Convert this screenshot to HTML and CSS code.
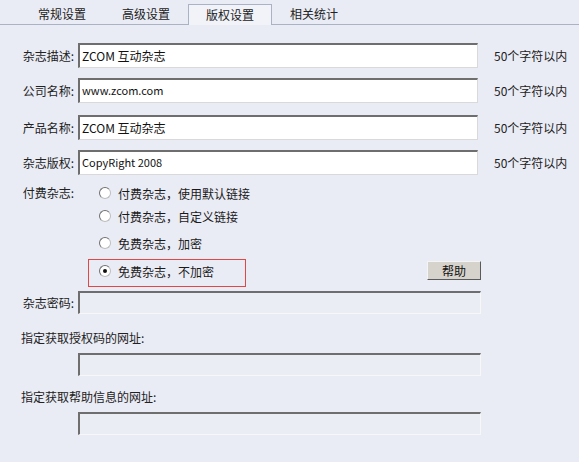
FILE: index.html
```html
<!DOCTYPE html>
<html lang="zh-CN">
<head>
<meta charset="utf-8">
<title>版权设置</title>
<link rel="stylesheet" href="styles.css">
</head>
<body>
<div class="tabs">
  <div class="tab">常规设置</div>
  <div class="tab">高级设置</div>
  <div class="tab active">版权设置</div>
  <div class="tab">相关统计</div>
</div>
<div class="panel">
  <div class="row r1">
    <label class="lbl">杂志描述:</label>
    <div class="field">ZCOM 互动杂志</div>
    <span class="hint">50个字符以内</span>
  </div>
  <div class="row r2">
    <label class="lbl">公司名称:</label>
    <div class="field small">www.zcom.com</div>
    <span class="hint">50个字符以内</span>
  </div>
  <div class="row r3">
    <label class="lbl">产品名称:</label>
    <div class="field">ZCOM 互动杂志</div>
    <span class="hint">50个字符以内</span>
  </div>
  <div class="row r4">
    <label class="lbl">杂志版权:</label>
    <div class="field small">CopyRight 2008</div>
    <span class="hint">50个字符以内</span>
  </div>

  <div class="radios">
    <div class="lbl lbl-top">付费杂志:</div>
    <div class="options">
      <div class="opt o1"><span class="radio"></span>付费杂志，使用默认链接</div>
      <div class="opt o2"><span class="radio"></span>付费杂志，自定义链接</div>
      <div class="opt o3"><span class="radio"></span>免费杂志，加密</div>
      <div class="last">
        <div class="opt selected"><span class="radio on"></span>免费杂志，不加密</div>
        <button class="btn">帮助</button>
      </div>
    </div>
  </div>

  <div class="row pw">
    <label class="lbl">杂志密码:</label>
    <div class="field wide disabled"></div>
  </div>

  <div class="caption c1">指定获取授权码的网址:</div>
  <div class="indent"><div class="field wide disabled"></div></div>
  <div class="caption c2">指定获取帮助信息的网址:</div>
  <div class="indent"><div class="field wide disabled"></div></div>
</div>
</body>
</html>
```

FILE: styles.css
```css
html, body {
  margin: 0;
  padding: 0;
  background: #eaecf5;
  font-family: "Noto Sans CJK SC", "DejaVu Sans", sans-serif;
  font-size: 12px;
  color: #1a1a1a;
}
body {
  width: 579px;
  height: 462px;
  overflow: hidden;
}
.tabs {
  display: flex;
  height: 24px;
  padding-left: 20px;
  border-bottom: 1px solid #aab3c6;
  align-items: flex-end;
}
.tab {
  width: 84px;
  height: 20px;
  line-height: 20px;
  text-align: center;
  box-sizing: border-box;
  color: #222;
}
.tab.active {
  background: #f1f3f9;
  border: 1px solid #aab3c6;
  border-bottom: none;
  height: 20px;
  margin-bottom: -1px;
  height: 21px;
  line-height: 19px;
}
.panel {
  display: flex;
  flex-direction: column;
  padding-top: 18px;
}
.row {
  display: flex;
  align-items: center;
  height: 25px;
}
.r2 { margin-top: 10px; }
.r3 { margin-top: 12px; }
.r4 { margin-top: 10px; height: 24px; }
.lbl {
  width: 74px;
  text-align: right;
  margin-right: 4px;
  flex: none;
  color: #222;
}
.field {
  width: 400px;
  height: 25px;
  box-sizing: border-box;
  background: #fff;
  border-top: 2px solid #6e6e6e;
  border-left: 2px solid #6e6e6e;
  border-right: 1px solid #d9d9d9;
  border-bottom: 1px solid #d9d9d9;
  padding-left: 2px;
  line-height: 21px;
  white-space: nowrap;
  color: #111;
}
.field.small { font-size: 11px; }
.field.wide { width: 403px; height: 23px; }
.field.disabled { background: #ebedf4; border-right-color: #f7f7f7; border-bottom-color: #f7f7f7; }
.hint {
  margin-left: 16px;
  color: #222;
}
.radios {
  display: flex;
  margin-top: 8px;
}
.lbl-top {
  line-height: 22px;
  text-align: right;
}
.options {
  display: flex;
  flex-direction: column;
  margin-left: 10px;
  width: 393px;
}
.opt {
  display: flex;
  align-items: center;
  height: 22px;
  padding-left: 11px;
}
.o2 { margin-top: 1px; }
.o3 { margin-top: 5px; }
.radio {
  width: 12px;
  height: 12px;
  box-sizing: border-box;
  border-radius: 50%;
  background: #fff;
  border: 1px solid #bdbdbd;
  border-top-color: #707070;
  border-left-color: #707070;
  margin-right: 7px;
  position: relative;
  flex: none;
}
.radio.on::after {
  content: "";
  position: absolute;
  left: 3px;
  top: 3px;
  width: 4px;
  height: 4px;
  border-radius: 50%;
  background: #111;
}
.last {
  display: flex;
  align-items: flex-start;
  justify-content: space-between;
  margin-top: 5px;
}
.opt.selected {
  width: 158px;
  height: 28px;
  box-sizing: border-box;
  border: 1px solid #e04848;
  padding-left: 10px;
  padding-bottom: 4px;
}
.btn {
  width: 54px;
  height: 19px;
  margin-top: 2px;
  padding: 0;
  font-family: inherit;
  font-size: 12px;
  line-height: 15px;
  background: #d6d3cc;
  border: 1px solid;
  border-color: #f4f4f4 #5a5a5a #5a5a5a #f4f4f4;
  color: #111;
}
.pw {
  margin-top: 4px;
  height: 23px;
}
.caption {
  padding-left: 21px;
  color: #222;
}
.c1 { margin-top: 15px; }
.c2 { margin-top: 12px; }
.indent {
  padding-left: 78px;
  margin-top: 7px;
}
```
